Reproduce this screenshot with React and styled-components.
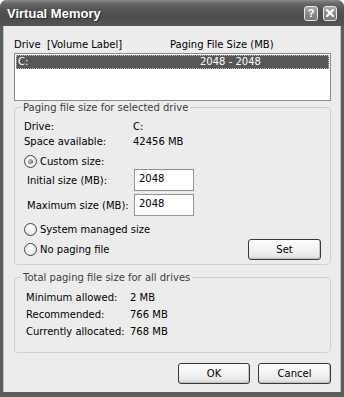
import React from 'react';
import styled, { createGlobalStyle } from 'styled-components';

const Global = createGlobalStyle`
  html, body { margin: 0; padding: 0; background: #fff; }
  body { font-family: "DejaVu Sans", "Liberation Sans", sans-serif; }
  * { box-sizing: border-box; }
`;

const Window = styled.div`
  width: 344px;
  height: 397px;
  display: flex;
  flex-direction: column;
  border-radius: 7px 7px 0 0;
  overflow: hidden;
  background: #5a5a5a;
`;

const TitleBar = styled.div`
  height: 26px;
  flex: none;
  display: flex;
  align-items: center;
  padding: 0 7px 0 7px;
  background: linear-gradient(to bottom, #8c8c8c 0%, #6a6a6a 12%, #555 35%, #4c4c4c 70%, #555 100%);
`;

const Title = styled.div`
  flex: 1;
  font-family: "Liberation Sans", Arial, sans-serif;
  font-weight: bold;
  font-size: 13px;
  color: #fff;
  text-shadow: 1px 1px 0 #2a2a2a;
  padding-top: 1px;
`;

const CaptionButtons = styled.div`
  display: flex;
  gap: 5px;
`;

const CaptionButton = styled.div`
  width: 14px;
  height: 15px;
  border: 1px solid #e8e8e8;
  border-radius: 3px;
  background: linear-gradient(to bottom, #a8a8a8 0%, #8a8a8a 50%, #777 100%);
  display: flex;
  align-items: center;
  justify-content: center;
  color: #fff;
  font-family: "Liberation Sans", Arial, sans-serif;
  font-weight: bold;
  font-size: 11px;
  line-height: 1;
`;

const Frame = styled.div`
  flex: 1;
  display: flex;
  border-left: 3px solid #5c5c5c;
  border-right: 3px solid #5c5c5c;
  border-bottom: 5px solid #5c5c5c;
`;

const Body = styled.div`
  flex: 1;
  background: #ececec;
  padding: 12px 10px 0 11px;
  display: flex;
  flex-direction: column;
  font-size: 10px;
  color: #000;
  box-shadow: inset 1px 0 0 #bdbdbd, inset -1px 0 0 #bdbdbd;
`;

const ListHeader = styled.div`
  display: grid;
  grid-template-columns: 156px 1fr;
  height: 14px;
  line-height: 14px;
  white-space: pre;
`;

const ListBox = styled.div`
  margin-top: 1px;
  height: 48px;
  border: 1px solid #8c8c8c;
  background: #fff;
  padding: 1px;
`;

const ListRow = styled.div`
  display: grid;
  grid-template-columns: 182px 1fr;
  height: 14px;
  line-height: 13px;
  background: ${p => (p.$selected ? '#575757' : 'transparent')};
  color: ${p => (p.$selected ? '#fff' : '#000')};
  outline: 1px dotted #bbb;
  outline-offset: -1px;
  padding-left: 2px;
`;

const Group = styled.fieldset`
  margin: ${p => p.$top || 0}px 0 0 0;
  padding: 0 9px ${p => p.$bottom || 4}px 9px;
  border: 1px solid #cfcfcf;
  border-radius: 4px;
  min-width: 0;
`;

const Legend = styled.legend`
  margin-left: -3px;
  padding: 0 2px;
  line-height: 13px;
  color: #3c3c3c;
`;

const InfoGrid = styled.div`
  display: grid;
  grid-template-columns: ${p => p.$col}px auto;
  grid-auto-rows: ${p => p.$row}px;
  align-items: center;
  margin-top: ${p => p.$top}px;
  padding-left: ${p => p.$indent || 0}px;
`;

const RadioRow = styled.label`
  display: flex;
  align-items: center;
  gap: 3px;
  height: 16px;
  margin-top: ${p => p.$top || 0}px;
`;

const RadioCircle = styled.span`
  width: 13px;
  height: 13px;
  border-radius: 50%;
  border: 1px solid #454545;
  background: radial-gradient(circle at 40% 35%, #fff 0%, #f2f2f2 50%, #d9d9d9 100%);
  display: flex;
  align-items: center;
  justify-content: center;
  flex: none;

  &::after {
    content: '';
    width: 5px;
    height: 5px;
    border-radius: 50%;
    background: radial-gradient(circle at 35% 35%, #c8c8c8 0%, #7a7a7a 70%);
    display: ${p => (p.$checked ? 'block' : 'none')};
  }
`;

const SizeRow = styled.div`
  display: flex;
  align-items: center;
  padding-left: 3px;
  margin-top: ${p => p.$top || 0}px;
`;

const SizeLabel = styled.span`
  width: 107px;
  flex: none;
`;

const TextBox = styled.div`
  width: 60px;
  height: 22px;
  border: 1px solid #939393;
  background: #fff;
  padding: 2px 4px 0;
  line-height: 13px;
`;

const ActionRow = styled.div`
  display: flex;
  align-items: center;
  justify-content: space-between;
  margin-top: ${p => p.$top || 0}px;
`;

const Button = styled.div`
  width: ${p => p.$w}px;
  height: 21px;
  border: 1px solid #383838;
  border-radius: 3px;
  background: linear-gradient(to bottom, #ffffff 0%, #f4f4f4 45%, #e6e6e6 85%, #cfcfcf 100%);
  box-shadow: inset -1px -1px 0 #c4c4c4;
  display: flex;
  align-items: center;
  justify-content: center;
  font-size: 10px;
`;

const Footer = styled.div`
  display: flex;
  justify-content: flex-end;
  gap: 8px;
  margin-top: 10px;
`;

export default function App() {
  return (
    <>
      <Global />
      <Window>
        <TitleBar>
          <Title>Virtual Memory</Title>
          <CaptionButtons>
            <CaptionButton>?</CaptionButton>
            <CaptionButton>
              <svg width="8" height="8" viewBox="0 0 8 8">
                <path d="M1 1 L7 7 M7 1 L1 7" stroke="#fff" strokeWidth="2" strokeLinecap="square" />
              </svg>
            </CaptionButton>
          </CaptionButtons>
        </TitleBar>
        <Frame>
          <Body>
            <ListHeader>
              <span>Drive  [Volume Label]</span>
              <span>Paging File Size (MB)</span>
            </ListHeader>
            <ListBox>
              <ListRow $selected>
                <span>C:</span>
                <span>2048 - 2048</span>
              </ListRow>
            </ListBox>

            <Group $bottom={4}>
              <Legend>Paging file size for selected drive</Legend>
              <InfoGrid $col={109} $row={15} $top={5}>
                <span>Drive:</span>
                <span>C:</span>
                <span>Space available:</span>
                <span>42456 MB</span>
              </InfoGrid>
              <RadioRow $top={4}>
                <RadioCircle $checked />
                <span>Custom size:</span>
              </RadioRow>
              <SizeRow>
                <SizeLabel>Initial size (MB):</SizeLabel>
                <TextBox>2048</TextBox>
              </SizeRow>
              <SizeRow $top={3}>
                <SizeLabel>Maximum size (MB):</SizeLabel>
                <TextBox>2048</TextBox>
              </SizeRow>
              <RadioRow $top={5}>
                <RadioCircle />
                <span>System managed size</span>
              </RadioRow>
              <ActionRow $top={2}>
                <RadioRow>
                  <RadioCircle />
                  <span>No paging file</span>
                </RadioRow>
                <Button $w={73}>Set</Button>
              </ActionRow>
            </Group>

            <Group $top={6} $bottom={12}>
              <Legend>Total paging file size for all drives</Legend>
              <InfoGrid $col={104} $row={17} $top={5} $indent={2}>
                <span>Minimum allowed:</span>
                <span>2 MB</span>
                <span>Recommended:</span>
                <span>766 MB</span>
                <span>Currently allocated:</span>
                <span>768 MB</span>
              </InfoGrid>
            </Group>

            <Footer>
              <Button $w={72}>OK</Button>
              <Button $w={73}>Cancel</Button>
            </Footer>
          </Body>
        </Frame>
      </Window>
    </>
  );
}
